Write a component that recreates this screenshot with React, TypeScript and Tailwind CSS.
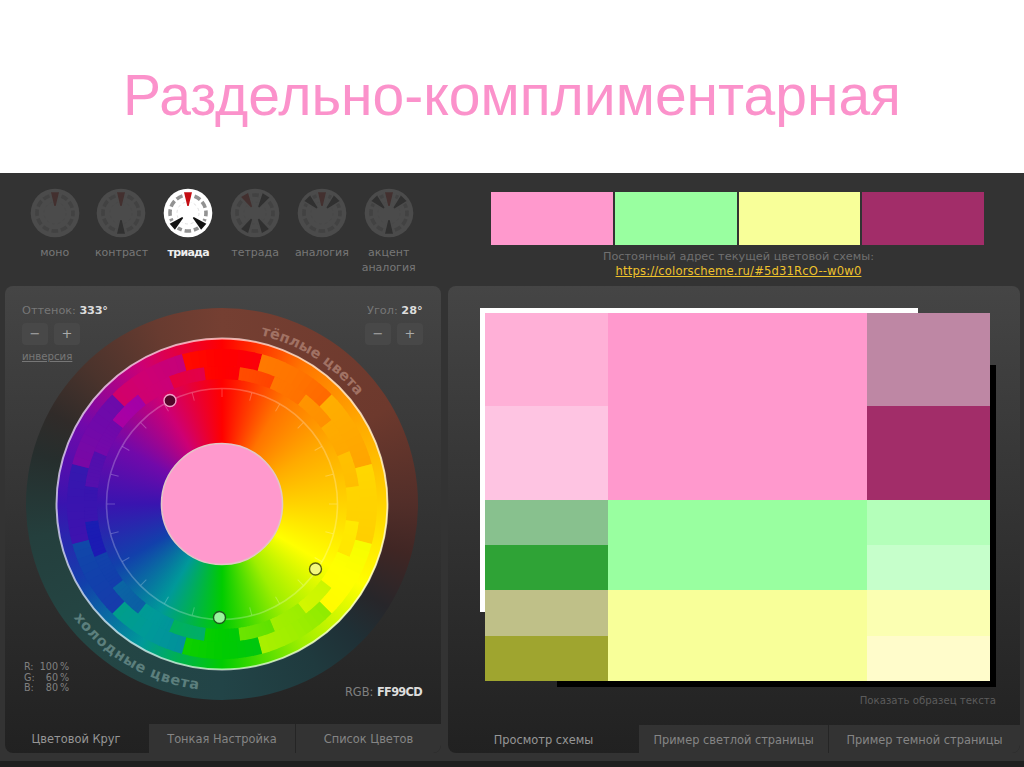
type Wedge = { angle: number; main?: boolean };

const dials: { label: string; active?: boolean; wedges: Wedge[] }[] = [
  { label: "моно", wedges: [{ angle: 0, main: true }] },
  { label: "контраст", wedges: [{ angle: 0, main: true }, { angle: 180 }] },
  { label: "триада", active: true, wedges: [{ angle: 0, main: true }, { angle: 131 }, { angle: 229 }] },
  { label: "тетрада", wedges: [{ angle: -30, main: true }, { angle: 32 }, { angle: 150 }, { angle: 210 }] },
  { label: "аналогия", wedges: [{ angle: 0, main: true }, { angle: -45 }, { angle: 45 }] },
  { label: "акцент аналогия", wedges: [{ angle: 0, main: true }, { angle: -45 }, { angle: 45 }, { angle: 180 }] },
];

// 24 hues of the wheel, clockwise from the top, 15 degrees apart
const hues = [
  "#ff0000", "#ff4900", "#ff7400", "#ff9200", "#ffaa00", "#ffbf00",
  "#ffd300", "#ffe800", "#ffff00", "#cef600", "#9fee00", "#67e300",
  "#00cc00", "#00af64", "#009999", "#0b61a4", "#1240ab", "#1b1bb3",
  "#3914af", "#530fad", "#7109aa", "#a600a6", "#cd0074", "#e40045",
];

const point = (r: number, deg: number) => {
  const a = (deg * Math.PI) / 180;
  return `${(r * Math.sin(a)).toFixed(2)} ${(-r * Math.cos(a)).toFixed(2)}`;
};

const sector = (r1: number, r2: number, from: number, to: number) =>
  `M${point(r1, from)} L${point(r2, from)} A${r2} ${r2} 0 0 1 ${point(r2, to)} L${point(r1, to)} A${r1} ${r1} 0 0 0 ${point(r1, from)} Z`;

const mix = (a: string, b: string, t: number) => {
  const ch = (c: string, i: number) => parseInt(c.slice(i, i + 2), 16);
  return `rgb(${[1, 3, 5].map((i) => Math.round(ch(a, i) * (1 - t) + ch(b, i) * t)).join(",")})`;
};

const SLICES = 10;

// Ring of flat cells; inside a cell the hue drifts against the wheel's direction
const Ring = ({ r1, r2, step, drift }: { r1: number; r2: number; step: number; drift: number }) => {
  const skip = step / 15;
  const cells = hues.filter((_, i) => i % skip === 0);
  return (
    <g>
      {cells.map((c, i) => {
        const next = cells[(i + 1) % cells.length];
        const prev = cells[(i + cells.length - 1) % cells.length];
        const start = i * step - step / 2;
        return Array.from({ length: SLICES }, (_, k) => {
          const t = 1 - (2 * (k + 0.5)) / SLICES;
          const from = start + (k * step) / SLICES;
          const to = from + step / SLICES + (k < SLICES - 1 ? 0.4 : 0);
          return <path key={`${c}${k}`} d={sector(r1, r2, from, to)} fill={mix(c, t > 0 ? next : prev, Math.abs(t) * drift)} />;
        });
      })}
    </g>
  );
};

const Dial = ({ wedges, active }: { wedges: Wedge[]; active?: boolean }) => {
  const face = active ? "#ffffff" : "#4b4b4b";
  return (
    <svg className="w-[50px] h-[50px] shrink-0" viewBox="-25 -25 50 50">
      <circle r="24.3" fill={face} />
      <circle r="18" fill="none" stroke={active ? "#929292" : "#424242"} strokeWidth="3.6" strokeDasharray="6.6 2.82" strokeDashoffset="3.3" />
      <circle r="11" fill="none" stroke={active ? "#d8d8d8" : "#484848"} strokeWidth="0.8" strokeDasharray="3 2.76" />
      {wedges.map((w) => (
        <g key={w.angle} transform={`rotate(${w.angle})`}>
          <path d="M-5.4 -21 H5.4 L2 -7 H-2Z" fill={face} />
          <path d="M-4 -20.8 H4 L0.7 -7 H-0.7Z" fill={active ? (w.main ? "#c40d12" : "#111") : w.main ? "#43302f" : "#303030"} />
        </g>
      ))}
    </svg>
  );
};

const StepButtons = () => (
  <div className="flex gap-[6px] mt-[7px] text-[#aaa] text-[13px] leading-[22px]">
    <span className="w-[26px] h-[22px] bg-[#484848] rounded-sm text-center">−</span>
    <span className="w-[26px] h-[22px] bg-[#484848] rounded-sm text-center">+</span>
  </div>
);

const ColorWheel = () => (
  <div className="relative size-[392px] rounded-full bg-[conic-gradient(#753f32,#6d392d_60deg,#522e29_90deg,#402624_105deg,#27262a_122deg,#1f3036_135deg,#1f3a3e_150deg,#224447_180deg,#244644_225deg,#243f3d_260deg,#262e2d_285deg,#302b29_298deg,#4a332c_315deg,#683b30_340deg,#753f32)]">
    <div className="absolute inset-[30px] rounded-full bg-[conic-gradient(#ff0000,#ff7400_30deg,#ffaa00_60deg,#ffd300_90deg,#ffff00_120deg,#9fee00_150deg,#00cc00_180deg,#009999_210deg,#1240ab_240deg,#3914af_270deg,#7109aa_300deg,#cd0074_330deg,#ff0000)]" />
    <svg className="absolute inset-0 w-full h-full" viewBox="-196 -196 392 392">
      <defs>
        <path id="warm" d={`M${point(173, 0)} A173 173 0 0 1 ${point(173, 90)}`} />
        <path id="cold" d={`M${point(187, 270)} A187 187 0 0 0 ${point(187, 180)}`} />
      </defs>
      <Ring r1={125} r2={138.3} step={15} drift={0.08} />
      <Ring r1={138} r2={155} step={30} drift={0.1} />
      <circle r="165.5" fill="none" stroke="#fff" strokeOpacity="0.65" strokeWidth="2" />
      <g stroke="#fff" strokeOpacity="0.24" fill="none">
        <circle r="115.5" strokeWidth="1.6" />
        {hues.map((c, i) => (
          <path key={c} d="M0 -115 V-107" transform={`rotate(${i * 15})`} />
        ))}
      </g>
      <circle r="60.5" fill="#ff99cd" stroke="#e3c6c6" strokeWidth="1.6" />
      <circle cx="-52" cy="-103.5" r="6" fill="#520529" stroke="#f0a0c8" strokeWidth="1.4" />
      <circle cx="-2.5" cy="113.5" r="6" fill="#99f59c" stroke="#1d5a1d" strokeWidth="1.4" />
      <circle cx="93.5" cy="65" r="6" fill="#f4f87c" stroke="#5a6010" strokeWidth="1.4" />
      <g className="font-[DejaVu_Sans,sans-serif] font-bold text-[14.5px]">
        <text fill="#a17264"><textPath href="#warm" startOffset="39" textLength="116">тёплые цвета</textPath></text>
        <text fill="#5c7f7d"><textPath href="#cold" startOffset="122" textLength="148">холодные цвета</textPath></text>
      </g>
    </svg>
  </div>
);

const Tab = ({ label, active, className }: { label: string; active?: boolean; className: string }) => (
  <div className={`flex items-center justify-center whitespace-nowrap pt-[3px] text-[11.4px] ${active ? "text-[#969696]" : "bg-[#333] text-[#858585]"} ${className}`}>
    {label}
  </div>
);

const LeftPanel = () => (
  <section className="w-[436px] h-[467px] flex flex-col rounded-lg overflow-hidden bg-gradient-to-b from-[#454545] to-[#212121]">
    <div className="h-[438px] pt-[20px] px-[17px] grid grid-cols-[1fr_auto] items-start">
      <div className="col-start-1 row-start-1 relative z-10">
        <p className="h-[10px] text-[11.3px] leading-[9px] text-[#777]">Оттенок: <b className="text-[#ddd] tracking-[-0.3px]">333°</b></p>
        <StepButtons />
        <p className="mt-[6px] text-[10.2px] leading-[12px] text-[#777] underline">инверсия</p>
      </div>
      <div className="col-start-2 row-start-1 relative z-10 mr-[1px]">
        <p className="h-[10px] pl-[2px] text-[11.3px] leading-[9px] text-[#777]">Угол: <b className="text-[#ddd]">28°</b></p>
        <StepButtons />
      </div>
      <div className="col-span-2 col-start-1 row-start-1 ml-[4px] mt-[1.5px]">
        <ColorWheel />
      </div>
      <div className="col-span-2 col-start-1 row-start-1 relative flex justify-between items-end mt-[341px] h-[50px] text-[#808080]">
        <div className="grid grid-cols-[12px_20px_auto] gap-x-[2px] text-[9.6px] leading-[10.7px] mb-[3px] ml-[2px]">
          <span>R:</span><span className="text-right">100</span><span>%</span>
          <span>G:</span><span className="text-right">60</span><span>%</span>
          <span>B:</span><span className="text-right">80</span><span>%</span>
        </div>
        <p className="text-[11.4px] leading-[12px] -mb-[1px] mr-[2px]">RGB: <b className="text-[#ddd] tracking-[-0.7px]">FF99CD</b></p>
      </div>
    </div>
    <div className="flex h-[29px] shrink-0">
      <Tab label="Цветовой Круг" active className="w-[144px] pr-[2px]" />
      <Tab label="Тонкая Настройка" className="w-[147px] border-r border-[#252525]" />
      <Tab label="Список Цветов" className="flex-1" />
    </div>
  </section>
);

const RightPanel = () => (
  <section className="w-[572px] h-[467px] flex flex-col rounded-lg overflow-hidden bg-gradient-to-b from-[#454545] to-[#212121]">
    <div className="h-[439px] pt-[22px] pl-[32px] pr-[24px]">
      <div className="relative w-[516px] h-[379px]">
        <div className="absolute left-0 top-0 w-[438px] h-[304px] bg-white" />
        <div className="absolute left-[77px] top-[57px] w-[439px] h-[322px] bg-black" />
        <div className="absolute left-[4.5px] top-[5px] w-[505.5px] h-[368px] grid grid-cols-[123px_259px_123.5px]">
          <div className="grid grid-rows-[93px_94px_45px_45px_46px_45px]">
            <div className="bg-[#ffb0d7]" />
            <div className="bg-[#fec4e2]" />
            <div className="bg-[#88c18e]" />
            <div className="bg-[#2fa336]" />
            <div className="bg-[#bfc088]" />
            <div className="bg-[#9fa52f]" />
          </div>
          <div className="grid grid-rows-[187px_90px_91px]">
            <div className="bg-[#ff99cd]" />
            <div className="bg-[#99ffa0]" />
            <div className="bg-[#f8ff99]" />
          </div>
          <div className="grid grid-rows-[93px_94px_45px_45px_46px_45px]">
            <div className="bg-[#be87a4]" />
            <div className="bg-[#a22d69]" />
            <div className="bg-[#b4ffba]" />
            <div className="bg-[#c6ffcb]" />
            <div className="bg-[#fbffb2]" />
            <div className="bg-[#fffccb]" />
          </div>
        </div>
      </div>
      <p className="mt-[8px] text-right text-[10.2px] leading-[11px] text-[#5c5c5c]">Показать образец текста</p>
    </div>
    <div className="flex h-[28px] shrink-0">
      <Tab label="Просмотр схемы" active className="w-[191px]" />
      <Tab label="Пример светлой страницы" className="w-[190px] border-r border-[#252525]" />
      <Tab label="Пример темной страницы" className="flex-1" />
    </div>
  </section>
);

export default function App() {
  return (
    <div className="w-[1024px] h-[767px] overflow-hidden flex flex-col bg-white font-[DejaVu_Sans,sans-serif]">
      <header className="h-[173px] shrink-0 flex justify-center pt-[62px]">
        <h1 className="font-[Liberation_Sans,Arial,sans-serif] text-[57px] leading-[66px] text-[#fb92cb] whitespace-nowrap">
          Раздельно-комплиментарная
        </h1>
      </header>

      <main className="h-[588px] shrink-0 bg-[#333]">
        <div className="h-[113px] flex">
          {/* Harmony presets */}
          <nav className="flex pl-[21.3px] pt-[15px] w-[491px]">
            {dials.map((d) => (
              <div key={d.label} className="w-[66.8px] flex flex-col items-center">
                <Dial wedges={d.wedges} active={d.active} />
                <span className={`mt-[7px] w-[60px] text-center text-[11px] leading-[15px] ${d.active ? "font-bold text-[#eee] tracking-[-0.7px]" : "text-[#777]"}`}>
                  {d.label}
                </span>
              </div>
            ))}
          </nav>

          {/* Current scheme */}
          <div className="pt-[18.5px] w-[493px] flex flex-col items-center">
            <div className="w-full flex gap-[2px] h-[53.5px]">
              <div className="flex-1 bg-[#ff99cd]" />
              <div className="flex-1 bg-[#99ffa0]" />
              <div className="flex-1 bg-[#f8ff99]" />
              <div className="flex-1 bg-[#a22d69]" />
            </div>
            <p className="mt-[4.5px] pl-[2px] text-[11.3px] leading-[14.5px] text-[#707070]">Постоянный адрес текущей цветовой схемы:</p>
            <a className="pl-[2px] text-[11.6px] leading-[14px] tracking-[0.15px] text-[#efc22c] underline">https://colorscheme.ru/#5d31RcO--w0w0</a>
          </div>
        </div>

        <div className="flex gap-[7px] pl-[5px]">
          <LeftPanel />
          <RightPanel />
        </div>
      </main>
      <footer className="flex-1 bg-[#1f1f1f]" />
    </div>
  );
}
